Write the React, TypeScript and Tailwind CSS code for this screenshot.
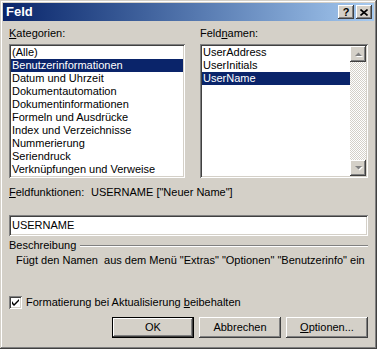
import React from "react";

const sunken =
  "shadow-[inset_1px_1px_#808080,inset_-1px_-1px_#ffffff,inset_2px_2px_#404040,inset_-2px_-2px_#d4d0c8]";
const raised =
  "shadow-[inset_-1px_-1px_#404040,inset_1px_1px_#ffffff,inset_-2px_-2px_#808080,inset_2px_2px_#d4d0c8]";

const kategorien = [
  "(Alle)",
  "Benutzerinformationen",
  "Datum und Uhrzeit",
  "Dokumentautomation",
  "Dokumentinformationen",
  "Formeln und Ausdrücke",
  "Index und Verzeichnisse",
  "Nummerierung",
  "Seriendruck",
  "Verknüpfungen und Verweise",
];

const feldnamen = ["UserAddress", "UserInitials", "UserName"];

function ListItem({ text, selected }: { text: string; selected?: boolean }) {
  return (
    <div
      className={
        "h-[13px] pl-[1px] leading-[13px] whitespace-nowrap " +
        (selected ? "bg-[#0a246a] text-white" : "text-black")
      }
    >
      {text}
    </div>
  );
}

function Arrow({ up }: { up?: boolean }) {
  return (
    <div className={"flex h-[16px] w-[16px] items-center justify-center bg-[#d4d0c8] " + raised}>
      <svg width="7" height="4" viewBox="0 0 7 4" className="overflow-visible">
        <path
          d={up ? "M1 5 L4.5 1.5 L8 5 Z" : "M1 1 L4.5 4.5 L8 1 Z"}
          fill="#ffffff"
        />
        <path d={up ? "M0 4 L3.5 0.5 L7 4 Z" : "M0 0 L3.5 3.5 L7 0 Z"} fill="#808080" />
      </svg>
    </div>
  );
}

function Button({
  children,
  isDefault,
}: {
  children: React.ReactNode;
  isDefault?: boolean;
}) {
  return (
    <div
      className={
        "flex h-[21px] w-[82px] items-center justify-center bg-[#d4d0c8] " +
        (isDefault
          ? "border border-black shadow-[inset_-1px_-1px_#404040,inset_1px_1px_#ffffff,inset_-2px_-2px_#808080]"
          : raised)
      }
    >
      {children}
    </div>
  );
}

export default function App() {
  return (
    <div className="h-[349px] w-[377px] bg-[#d4d0c8] p-[3px] text-[11px] text-black shadow-[inset_-1px_-1px_#404040,inset_1px_1px_#d4d0c8,inset_-2px_-2px_#808080,inset_2px_2px_#ffffff] [font-family:'Liberation_Sans',Arial,sans-serif]">
      {/* Titelleiste */}
      <div className="flex h-[18px] items-center justify-between bg-gradient-to-r from-[#0a246a] to-[#a6caf0] pr-[2px] pl-[3px]">
        <span className="text-[13px] font-bold text-white">Feld</span>
        <div className="flex gap-[2px]">
          <div className={"flex h-[14px] w-[16px] items-center justify-center bg-[#d4d0c8] text-[11px] font-bold leading-none " + raised}>
            ?
          </div>
          <div className={"flex h-[14px] w-[16px] items-center justify-center bg-[#d4d0c8] " + raised}>
            <svg width="8" height="7" viewBox="0 0 8 7">
              <path d="M0.5 0.5 L7.5 6.5 M7.5 0.5 L0.5 6.5" stroke="#000" strokeWidth="1.6" />
            </svg>
          </div>
        </div>
      </div>

      <div className="px-[6px] pt-[6px]">
        <div className="flex gap-[15px]">
          <div className="w-[176px]">
            <div className="mb-[4px] h-[13px] leading-[13px]">
              <span className="underline">K</span>ategorien:
            </div>
            <div className={"h-[134px] bg-white p-[2px] " + sunken}>
              {kategorien.map((k) => (
                <ListItem key={k} text={k} selected={k === "Benutzerinformationen"} />
              ))}
            </div>
          </div>
          <div className="w-[168px]">
            <div className="mb-[4px] h-[13px] leading-[13px]">
              Feld<span className="underline">n</span>amen:
            </div>
            <div className={"flex h-[134px] bg-white p-[2px] " + sunken}>
              <div className="flex-1">
                {feldnamen.map((f) => (
                  <ListItem key={f} text={f} selected={f === "UserName"} />
                ))}
              </div>
              <div className="flex w-[16px] flex-col justify-between bg-[repeating-conic-gradient(#ffffff_0_25%,#d4d0c8_0_50%)] bg-[length:2px_2px]">
                <Arrow up />
                <Arrow />
              </div>
            </div>
          </div>
        </div>

        <div className="mt-[8px] flex h-[13px] leading-[13px]">
          <span className="w-[82px]">
            <span className="underline">F</span>eldfunktionen:
          </span>
          <span>USERNAME ["Neuer Name"]</span>
        </div>

        <div className={"mt-[16px] flex h-[21px] items-center bg-white px-[3px] " + sunken}>
          USERNAME
        </div>

        <div className="mt-[3px] flex h-[13px] items-center gap-[4px] leading-[13px]">
          <span>Beschreibung</span>
          <div className="h-[2px] flex-1 border-t border-b border-t-[#808080] border-b-white" />
        </div>
        <div className="mt-[2px] h-[13px] pl-[7px] leading-[13px] whitespace-pre">
          Fügt den Namen  aus dem Menü "Extras" "Optionen" "Benutzerinfo" ein
        </div>

        <div className="mt-[29px] flex h-[13px] items-center gap-[4px]">
          <div className={"flex h-[13px] w-[13px] items-center justify-center bg-white " + sunken}>
            <svg width="7" height="7" viewBox="0 0 7 7">
              <path d="M0 2 L0 5 L2 7 L7 2 L7 0 L2 5 Z" fill="#000" />
            </svg>
          </div>
          <span className="leading-[13px]">
            Formatierung bei Aktualisierung <span className="underline">b</span>eibehalten
          </span>
        </div>

        <div className="mt-[8px] flex justify-end gap-[5px]">
          <Button isDefault>OK</Button>
          <Button>Abbrechen</Button>
          <Button>
            <span>
              <span className="underline">O</span>ptionen...
            </span>
          </Button>
        </div>
      </div>
    </div>
  );
}
